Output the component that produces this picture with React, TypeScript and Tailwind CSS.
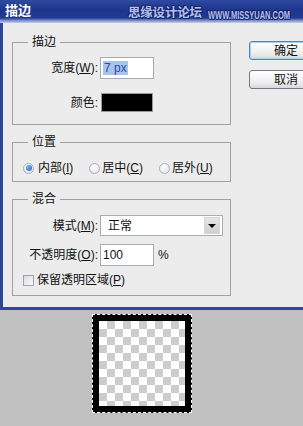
import React from "react";

const font = "font-['Liberation_Sans','Noto_Sans_CJK_SC',sans-serif]";

function U({ children }: { children: React.ReactNode }) {
  return <span className="underline underline-offset-[1px]">{children}</span>;
}

function Radio({ checked }: { checked?: boolean }) {
  return (
    <span className="w-[11px] h-[11px] rounded-full border border-[#a9b0bd] bg-[radial-gradient(circle_at_40%_35%,#ffffff,#dcdfe6)] flex items-center justify-center shrink-0">
      {checked && <span className="w-[6px] h-[6px] rounded-full bg-[radial-gradient(circle_at_35%_35%,#7fb2ea,#1d5fb8)]" />}
    </span>
  );
}

const outline = "[text-shadow:1px_0_#15236a,-1px_0_#15236a,0_1px_#15236a,0_-1px_#15236a,1px_1px_#15236a,-1px_-1px_#15236a]";

export default function App() {
  return (
    <div className={`w-[303px] h-[426px] bg-[#c0c0c0] overflow-hidden ${font} text-[12px] text-[#111] leading-none`}>
      {/* Dialog */}
      <div className="h-[310px] flex flex-col border-l-[3px] border-b-[3px] border-[#2c4699]">
        {/* Title bar */}
        <div className="h-[23px] shrink-0 -ml-[3px] flex items-start overflow-hidden whitespace-nowrap bg-[linear-gradient(to_bottom,#2e4aa0_0px,#1e358c_10px,#223a91_18px,#6b80c2_20px,#a9b5dd_22px,#c9cfe6_23px)]">
          <span className="shrink-0 ml-[5px] mt-[4px] text-white font-bold text-[13px] leading-[14px]">描边</span>
          <span className="shrink-0 ml-[97px] mt-[6px] text-[12.5px] leading-[14px] text-[#b4c0ee] font-bold tracking-[-0.2px]">
            <span className={outline}>思缘设计论坛</span>
          </span>
          <span className="shrink-0 w-[86px] ml-[6px] mt-[9px] overflow-visible">
            <span className={`inline-block origin-left scale-x-75 text-[10px] leading-[9px] font-bold text-[#b4c0ee] ${outline}`}>
              WWW.MISSYUAN.COM
            </span>
          </span>
        </div>
        {/* Body */}
        <div className="flex-1 bg-[#ececec] flex pl-[9px] pt-[11px]">
          <div className="w-[219px] shrink-0 flex flex-col gap-[9px]">
            {/* 描边 */}
            <fieldset className="border border-[#a0a0a0] px-0 pt-[7px] pb-[12px]">
              <legend className="ml-[15px] px-[4px] leading-[16px]">描边</legend>
              <div className="grid grid-cols-[85px_auto] gap-x-[2px] items-center">
                <span className="text-right">宽度(<U>W</U>):</span>
                <div className="w-[54px] h-[22px] border border-[#a5acb5] bg-white flex items-center pl-[2px]">
                  <span className="bg-[#a8c4ea] text-[#2a4aa8] px-[1px] leading-[14px]">7 px</span>
                </div>
                <span className="text-right mt-[14px]">颜色:</span>
                <div className="mt-[14px] ml-[1px] w-[52px] h-[19px] border border-[#9a9a9a] bg-black" />
              </div>
            </fieldset>
            {/* 位置 */}
            <fieldset className="border border-[#a0a0a0] px-0 pt-[10px] pb-[5px]">
              <legend className="ml-[15px] px-[4px] leading-[16px]">位置</legend>
              <div className="flex items-center h-[16px] pl-[10px] whitespace-nowrap">
                <Radio checked />
                <span className="ml-[4px]">内部(<U>I</U>)</span>
                <span className="ml-[16px]"><Radio /></span>
                <span className="ml-[2px]">居中(<U>C</U>)</span>
                <span className="ml-[16px]"><Radio /></span>
                <span className="ml-[2px]">居外(<U>U</U>)</span>
              </div>
            </fieldset>
            {/* 混合 */}
            <fieldset className="border border-[#a0a0a0] px-0 pt-[8px] pb-[7px]">
              <legend className="ml-[15px] px-[4px] leading-[16px]">混合</legend>
              <div className="grid grid-cols-[85px_auto] gap-x-[2px] gap-y-[8px] items-center">
                <span className="text-right">模式(<U>M</U>):</span>
                <div className="w-[123px] h-[21px] border border-[#a5acb5] bg-white flex items-center">
                  <span className="pl-[7px] flex-1">正常</span>
                  <span className="w-[16px] h-[17px] mr-[2px] bg-[linear-gradient(to_bottom,#e6e6e6,#cfcfcf)] border border-[#d6d6d6] flex items-center justify-center">
                    <span className="w-0 h-0 border-l-[4px] border-r-[4px] border-t-[4px] border-l-transparent border-r-transparent border-t-black" />
                  </span>
                </div>
                <span className="text-right whitespace-nowrap">不透明度(<U>O</U>):</span>
                <div className="flex items-center">
                  <div className="w-[54px] h-[22px] border border-[#a5acb5] bg-white flex items-center pl-[2px]">100</div>
                  <span className="ml-[4px]">%</span>
                </div>
              </div>
              <div className="flex items-center pl-[10px] mt-[6px] h-[16px]">
                <span className="w-[11px] h-[11px] border border-[#9ea3ab] bg-[linear-gradient(135deg,#dcdcdc,#fafafa)]" />
                <span className="ml-[3px]">保留透明区域(<U>P</U>)</span>
              </div>
            </fieldset>
          </div>
          {/* Buttons */}
          <div className="ml-[18px] pt-[7px] flex flex-col gap-[10px] shrink-0">
            <div className="w-[76px] h-[19px] rounded-[3px] border border-[#4f86b8] shadow-[inset_0_0_0_1px_#a6d2f0] bg-[linear-gradient(to_bottom,#ffffff,#ececec_70%,#d8d8d8)] flex items-center justify-center pr-[2px]">
              确定
            </div>
            <div className="w-[76px] h-[19px] rounded-[3px] border border-[#6f7a88] bg-[linear-gradient(to_bottom,#ffffff,#ececec_70%,#d8d8d8)] flex items-center justify-center pr-[2px]">
              取消
            </div>
          </div>
        </div>
      </div>
      {/* Preview */}
      <div className="flex pt-[4px] pl-[92px]">
        <div className="w-[100px] h-[99px] bg-black border border-dashed border-white p-[6px]">
          <div className="w-full h-full bg-[conic-gradient(#cccccc_25%,#ffffff_0_50%,#cccccc_0_75%,#ffffff_0)] bg-[length:16px_16px]" />
        </div>
      </div>
    </div>
  );
}
